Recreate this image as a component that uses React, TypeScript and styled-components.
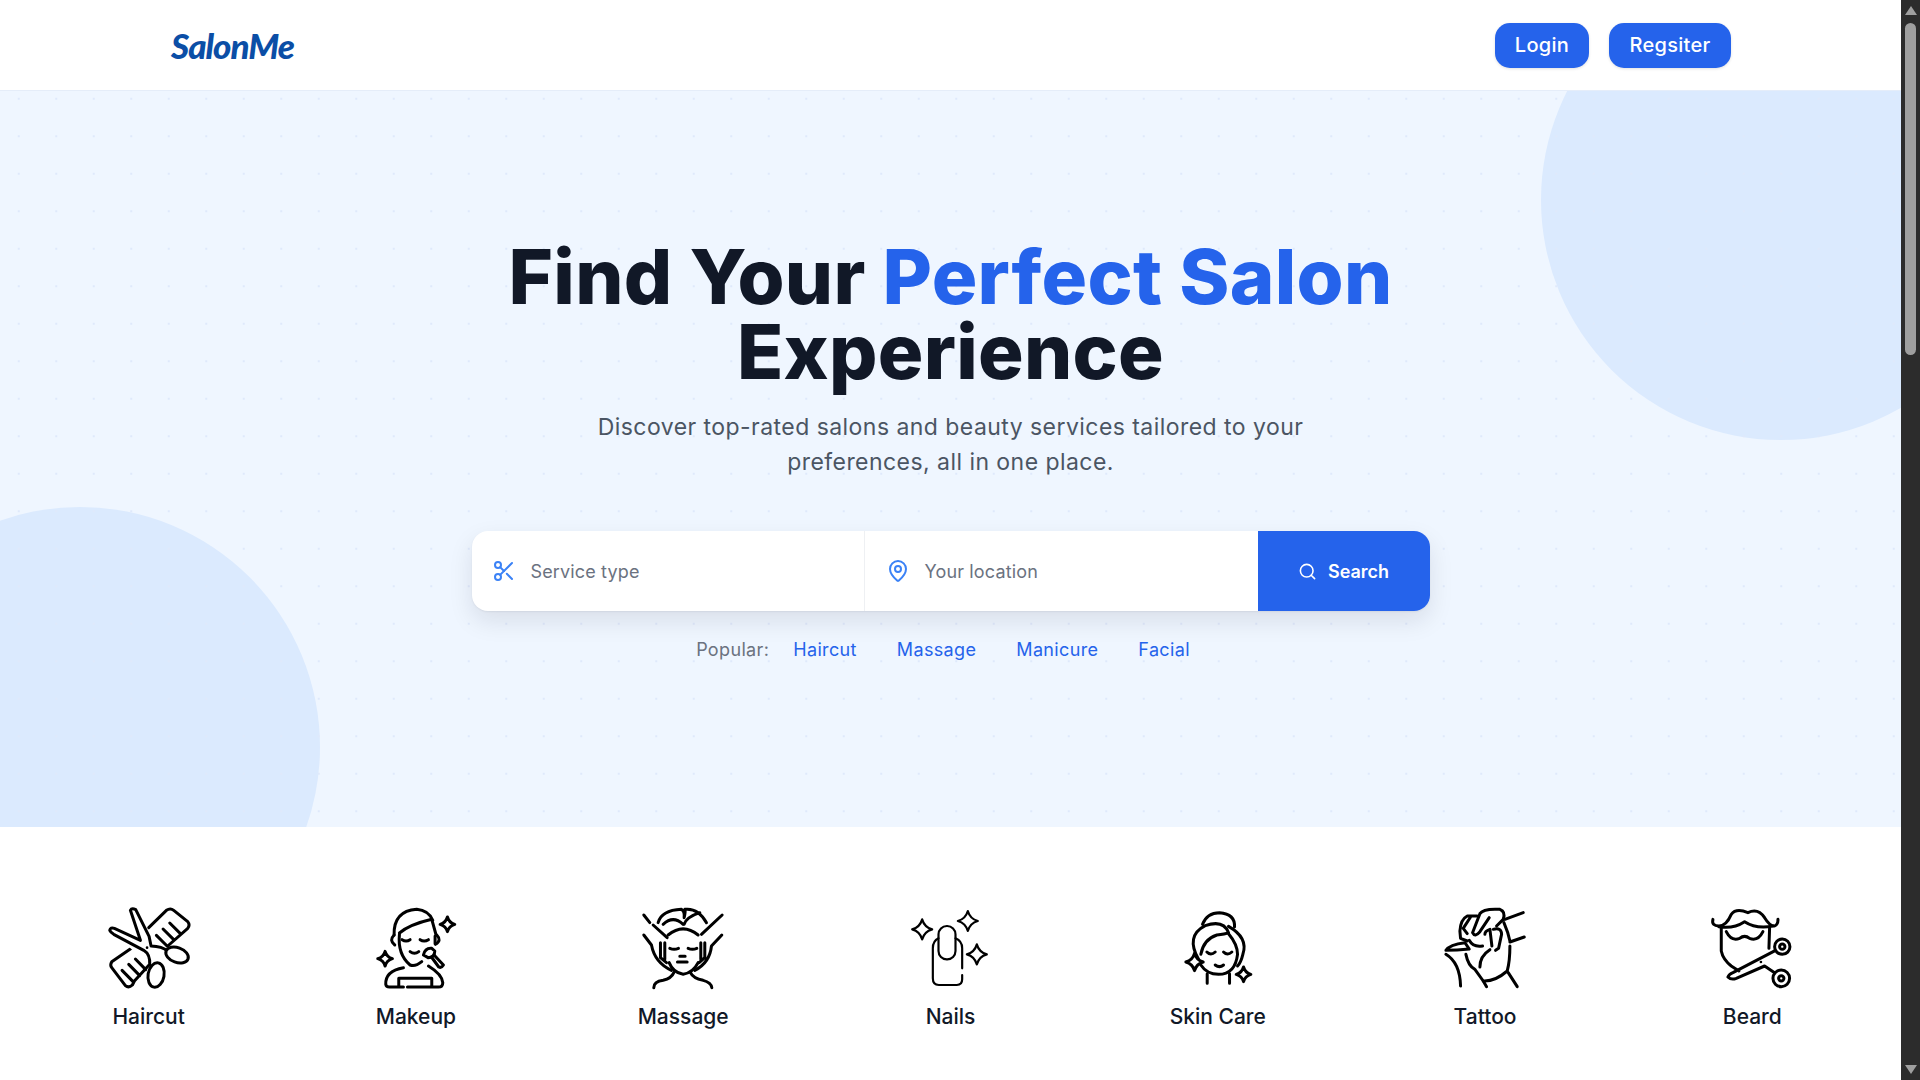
import React from 'react'
import styled, { createGlobalStyle } from 'styled-components'
import { Scissors, MapPin, Search } from 'lucide-react'

const GlobalStyle = createGlobalStyle`
  html, body {
    margin: 0;
    padding: 0;
    height: 100%;
    overflow: hidden;
    background: #fff;
    font-family: Inter, 'Liberation Sans', sans-serif;
  }
  * { box-sizing: border-box; }
`

const Shell = styled.div`
  display: flex;
  height: 1080px;
  overflow: hidden;
`

const Page = styled.main`
  flex: 1;
  min-width: 0;
  overflow: hidden;
`

const ScrollRail = styled.div`
  width: 19px;
  flex: none;
  background: #2c2c2c;
  display: flex;
  flex-direction: column;
  align-items: center;
  padding: 6px 0;
`

const ScrollArrow = styled.div<{ $down?: boolean }>`
  width: 0;
  height: 0;
  border-left: 6px solid transparent;
  border-right: 6px solid transparent;
  ${(p) => (p.$down ? 'border-top: 9px solid #9f9f9f; margin-top: auto;' : 'border-bottom: 9px solid #9f9f9f;')}
`

const ScrollThumb = styled.div`
  width: 11px;
  height: 332px;
  margin-top: 8px;
  border-radius: 6px;
  background: #9f9f9f;
`

const Nav = styled.header`
  height: 91px;
  background: #fff;
  border-bottom: 1px solid #e5edf9;
  display: flex;
  align-items: center;
  justify-content: space-between;
  padding: 0 170px 0 171px;
`

const Logo = styled.div`
  font-family: Lato, 'Liberation Sans', sans-serif;
  font-weight: 900;
  font-style: italic;
  font-size: 35px;
  letter-spacing: -1px;
  color: #0b4ea6;
`

const NavActions = styled.div`
  display: flex;
  gap: 20px;
`

const NavButton = styled.button<{ $w: number }>`
  width: ${(p) => p.$w}px;
  height: 45px;
  border: none;
  border-radius: 15px;
  background: #2563eb;
  color: #fff;
  font-family: inherit;
  font-size: 20px;
  font-weight: 500;
  letter-spacing: 0.3px;
  box-shadow: 0 1px 3px rgba(0, 0, 0, 0.12);
`

const Hero = styled.section`
  position: relative;
  height: 736px;
  overflow: hidden;
  background: #eff6ff;
  padding-top: 148px;
`

const Blob = styled.div<{ $corner: 'tr' | 'bl' }>`
  position: absolute;
  width: 480px;
  height: 480px;
  border-radius: 50%;
  background: #dbeafe;
  ${(p) => (p.$corner === 'tr' ? 'top: -131px; right: -120px;' : 'bottom: -160px; left: -160px;')}
`

const DotLayer = styled.div`
  position: absolute;
  inset: 0;
  background-image: radial-gradient(circle, #dfe9fb 1.2px, transparent 1.4px);
  background-size: 37.5px 37.5px;
  background-position: 0 -11px;
`

const HeroContent = styled.div`
  position: relative;
  display: flex;
  flex-direction: column;
  align-items: center;
`

const Title = styled.h1`
  margin: 0;
  width: 1000px;
  text-align: center;
  font-size: 76px;
  font-weight: 800;
  line-height: 75px;
  letter-spacing: 0.3px;
  color: #111827;
`

const Accent = styled.span`
  color: #2563eb;
`

const Subtitle = styled.p`
  margin: 21px 0 0;
  width: 760px;
  text-align: center;
  font-size: 23px;
  line-height: 35px;
  letter-spacing: 0.45px;
  color: #4b5563;
`

const SearchBar = styled.div`
  margin-top: 51px;
  width: 958px;
  height: 80px;
  display: flex;
  border-radius: 16px;
  overflow: hidden;
  background: #fff;
  box-shadow: 0 10px 25px rgba(15, 23, 42, 0.1), 0 1px 2px rgba(15, 23, 42, 0.06);
`

const SearchField = styled.div<{ $divider?: boolean; $pad: number; $gap: number }>`
  width: 393px;
  display: flex;
  align-items: center;
  gap: ${(p) => p.$gap}px;
  padding-left: ${(p) => p.$pad}px;
  color: #3b82f6;
  ${(p) => p.$divider && 'border-right: 1px solid #eef0f3;'}
`

const Placeholder = styled.span`
  font-size: 18px;
  letter-spacing: 0.15px;
  color: #6b7280;
`

const SearchButton = styled.button`
  flex: 1;
  display: flex;
  align-items: center;
  justify-content: center;
  gap: 11px;
  border: none;
  background: #2563eb;
  color: #fff;
  font-family: inherit;
  font-size: 18px;
  font-weight: 600;
`

const PopularRow = styled.div`
  margin-top: 24px;
  padding-right: 15px;
  display: flex;
  align-items: center;
  gap: 40px;
  height: 28px;
  font-size: 18px;
  letter-spacing: 0.35px;
  color: #2563eb;
`

const PopularLabel = styled.span`
  color: #6b7280;
  margin-right: -16px;
`

const Categories = styled.section`
  display: grid;
  grid-template-columns: repeat(7, 1fr);
  padding: 75px 15px 0;
  background: #fff;
`

const Category = styled.div`
  display: flex;
  flex-direction: column;
  align-items: center;
`

const IconBox = styled.svg<{ $thin?: boolean }>`
  width: 90px;
  height: 90px;
  display: block;
  fill: none;
  stroke: #000;
  stroke-width: ${(p) => (p.$thin ? 6.5 : 9)};
  stroke-linecap: round;
  stroke-linejoin: round;
  overflow: visible;
`

const CategoryName = styled.div`
  margin-top: 11px;
  font-size: 21px;
  font-weight: 500;
  line-height: 28px;
  color: #111827;
`

const sparkle = (x: number, y: number, r: number) => {
  const c = r * 0.22
  return `M${x},${y - r} Q${x + c},${y - c} ${x + r},${y} Q${x + c},${y + c} ${x},${y + r} Q${x - c},${y + c} ${x - r},${y} Q${x - c},${y - c} ${x},${y - r}Z`
}

// every icon is drawn in the coords of a 360x360 crop around it
const box = (x: number) => `${x * 3 - 135} 33 270 270`

const HaircutIcon = () => (
  <IconBox viewBox={box(58.6)}>
    <path d="M175,110 L228,58 Q240,50 250,58 L292,92 Q300,102 292,112 L232,165 M270,128 L238,96 M250,146 L218,114 M230,165 L198,133" />
    <path d="M125,170 L64,212 Q58,222 64,230 L105,284 Q115,292 126,282 L132,270 L176,222 M95,238 L128,272 M115,220 L148,254 M135,204 L166,236" />
    <path
      fill="#fff"
      d="M58,118 Q60,108 72,112 L150,148 L120,58 Q124,50 136,56 L176,136 L182,165 Q215,166 232,180 M58,118 Q60,124 70,130 L160,178 Q180,190 178,222"
    />
    <ellipse cx="260" cy="192" rx="35" ry="22" fill="#fff" transform="rotate(20 260 192)" />
    <ellipse cx="197" cy="252" rx="24" ry="37" fill="#fff" transform="rotate(10 197 252)" />
    <circle cx="170" cy="170" r="4" fill="#000" stroke="none" />
  </IconBox>
)

const MakeupIcon = () => (
  <IconBox viewBox={box(55.9)}>
    <path d="M102,132 Q100,60 170,55 Q205,58 218,88 M118,126 Q150,100 215,85 L228,132" />
    <path d="M102,132 Q86,148 104,162 M230,132 Q246,148 226,160" />
    <path d="M118,130 Q112,190 150,222 Q165,228 185,212 M225,135 V158" />
    <path d="M126,146 Q138,154 150,146 M180,146 Q192,154 205,146 M150,182 Q163,192 176,182" />
    <path d="M190,192 Q195,170 215,172 L224,180 Q224,200 204,200Z" />
    <path d="M214,198 L236,228 Q244,232 250,222 L224,194" />
    <path d="M130,230 Q75,240 77,280 Q78,288 88,288 H130 M142,288 H235 Q248,288 248,275 Q246,250 205,225" />
    <path d="M116,285 V262 H215 V285" />
    <path d={sparkle(262, 100, 22)} />
    <path d={sparkle(75, 203, 22)} />
  </IconBox>
)

const MassageIcon = () => (
  <IconBox viewBox={box(53.2)}>
    <path d="M85,95 Q95,58 155,55 Q165,60 163,80 Q168,60 165,55 Q205,50 230,95 M160,100 Q130,72 100,100 M163,100 Q170,78 210,65" />
    <path d="M115,132 Q160,95 205,132 M118,215 Q130,245 160,250 Q190,245 205,215" />
    <path d="M120,172 Q133,178 146,172 M175,172 Q188,178 201,172 M150,196 H166 M143,213 H172" />
    <path d="M42,72 L60,95 M70,102 L112,140 M42,132 L65,162 Q75,215 125,238 M92,155 V200 L110,215 M105,155 V205" />
    <path d="M277,72 L215,130 M276,132 L245,165 Q240,215 195,238 M225,155 V200 L208,215 M213,155 V205" />
    <path d="M132,245 Q125,262 100,268 Q72,272 72,290 M182,245 Q190,262 220,268 Q244,274 246,290" />
  </IconBox>
)

const NailsIcon = () => (
  <IconBox viewBox={box(50.5)} $thin>
    <rect x="117" y="105" width="51" height="100" rx="25" />
    <path d="M117,142 Q100,150 100,172 V262 Q100,282 118,282 H172 Q188,282 188,265 V252 M168,142 Q188,150 188,172 V232" />
    <path d={sparkle(68, 115, 30)} />
    <path d={sparkle(205, 90, 30)} />
    <path d={sparkle(232, 190, 30)} />
  </IconBox>
)

const SkinCareIcon = () => (
  <IconBox viewBox={box(57.8)}>
    <path d="M127,100 Q140,65 178,65 Q225,68 223,108" />
    <path d="M115,205 Q75,135 135,104 Q190,85 205,125 Q195,130 170,132 Q130,145 122,190" />
    <path d="M205,106 Q265,140 248,190 Q242,215 232,225 M205,128 Q232,160 232,190 Q225,250 175,250 Q140,250 122,222" />
    <path d="M140,183 Q152,195 165,183 M190,183 Q202,195 215,183 M165,222 Q178,232 190,222" />
    <path d="M141,248 V277 M208,248 V277" />
    <path fill="#fff" d={sparkle(103, 213, 26)} />
    <path d={sparkle(250, 250, 22)} />
  </IconBox>
)

const TattooIcon = () => (
  <IconBox viewBox={box(55.1)}>
    <path d="M280,65 L225,85 M283,138 L240,153 M222,95 Q235,125 240,150" />
    <path d="M150,68 Q160,52 210,55 Q228,62 220,85 L200,105 M150,68 L128,125 Q135,140 150,122 L178,80" />
    <path d="M142,75 L112,75 Q92,85 90,120 L92,142 L112,150 M122,78 L100,112 L112,128" />
    <path d="M48,178 Q60,160 105,155 L118,174 Q80,178 48,178Z" />
    <path d="M118,148 Q130,170 158,165 M165,130 Q165,120 180,115 L186,165 M190,115 Q215,108 215,130 L206,172 L197,178 M180,176 Q150,195 150,228" />
    <path d="M240,165 Q240,210 232,240 Q195,272 160,270 L135,235 Q115,225 108,190" />
    <path d="M235,245 L262,287 M160,270 L170,287 M48,190 Q90,215 92,285" />
  </IconBox>
)

const BeardIcon = () => (
  <IconBox viewBox={box(62.4)}>
    <path d="M70,85 Q65,105 88,105 Q110,105 125,70 Q140,50 175,65 Q205,50 225,80 Q240,105 255,105 Q266,100 265,85" />
    <path d="M88,107 Q130,115 165,92 Q200,115 250,105" />
    <path d="M95,108 V180 Q100,205 125,225 L148,240 M240,110 L238,172" />
    <path d="M110,122 Q125,152 150,142 Q165,130 180,142 Q205,152 220,122" />
    <path fill="#fff" d="M115,258 Q118,250 130,245 L258,178 M115,258 Q125,268 140,262 L225,225 L256,246" />
    <circle cx="278" cy="167" r="23" fill="#fff" />
    <circle cx="278" cy="167" r="8" />
    <circle cx="275" cy="262" r="25" fill="#fff" />
    <circle cx="275" cy="262" r="8" />
    <circle cx="214" cy="213" r="4" fill="#000" stroke="none" />
  </IconBox>
)

const categories = [
  { name: 'Haircut', Icon: HaircutIcon },
  { name: 'Makeup', Icon: MakeupIcon },
  { name: 'Massage', Icon: MassageIcon },
  { name: 'Nails', Icon: NailsIcon },
  { name: 'Skin Care', Icon: SkinCareIcon },
  { name: 'Tattoo', Icon: TattooIcon },
  { name: 'Beard', Icon: BeardIcon },
]

const App = (): JSX.Element => (
  <Shell>
    <GlobalStyle />
    <Page>
      <Nav>
        <Logo>SalonMe</Logo>
        <NavActions>
          <NavButton $w={94}>Login</NavButton>
          <NavButton $w={122}>Regsiter</NavButton>
        </NavActions>
      </Nav>

      <Hero>
        <Blob $corner="tr" />
        <Blob $corner="bl" />
        <DotLayer />
        <HeroContent>
          <Title>
            Find Your <Accent>Perfect Salon</Accent> Experience
          </Title>
          <Subtitle>
            Discover top-rated salons and beauty services tailored to your preferences, all in one place.
          </Subtitle>
          <SearchBar>
            <SearchField $divider $pad={20} $gap={15}>
              <Scissors size={24} strokeWidth={2} />
              <Placeholder>Service type</Placeholder>
            </SearchField>
            <SearchField $pad={21} $gap={15}>
              <MapPin size={24} strokeWidth={2} />
              <Placeholder>Your location</Placeholder>
            </SearchField>
            <SearchButton>
              <Search size={19} strokeWidth={2} />
              Search
            </SearchButton>
          </SearchBar>
          <PopularRow>
            <PopularLabel>Popular:</PopularLabel>
            <span>Haircut</span>
            <span>Massage</span>
            <span>Manicure</span>
            <span>Facial</span>
          </PopularRow>
        </HeroContent>
      </Hero>

      <Categories>
        {categories.map(({ name, Icon }) => (
          <Category key={name}>
            <Icon />
            <CategoryName>{name}</CategoryName>
          </Category>
        ))}
      </Categories>
    </Page>
    <ScrollRail>
      <ScrollArrow />
      <ScrollThumb />
      <ScrollArrow $down />
    </ScrollRail>
  </Shell>
)

export default App
